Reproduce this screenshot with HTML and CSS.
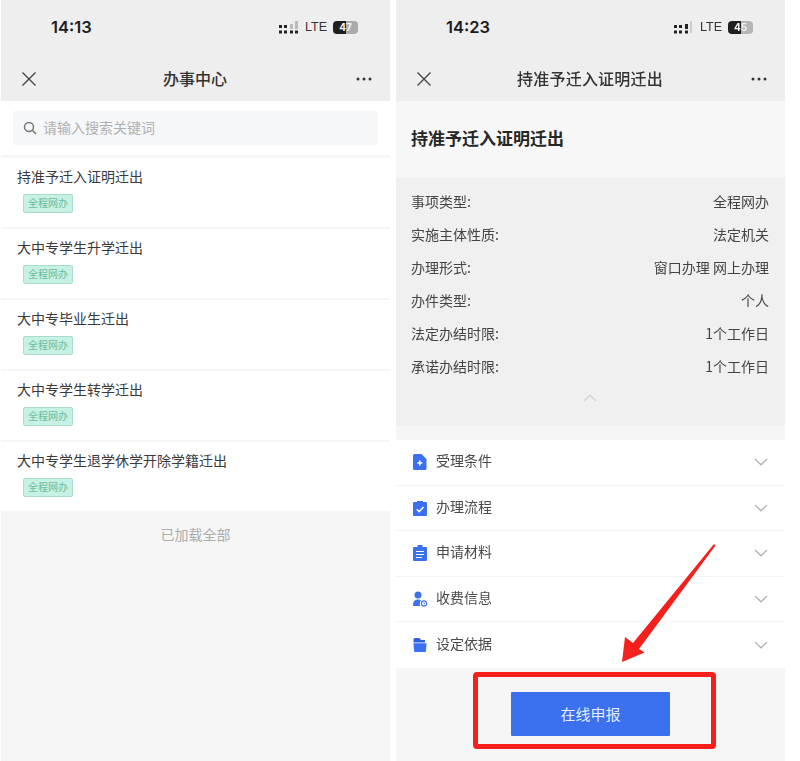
FILE: index.html
```html
<!DOCTYPE html>
<html lang="zh">
<head>
<meta charset="utf-8">
<title>办事中心</title>
<link rel="stylesheet" href="styles.css">
</head>
<body>
<svg class="defs" width="0" height="0" aria-hidden="true">
  <defs>
    <symbol id="close" viewBox="0 0 16 16"><path d="M1.5 1.5 14.5 14.5M14.5 1.5 1.5 14.5" fill="none" stroke="currentColor" stroke-width="1.4"/></symbol>
    <symbol id="more" viewBox="0 0 16 4"><circle cx="2" cy="2" r="1.5"/><circle cx="8" cy="2" r="1.5"/><circle cx="14" cy="2" r="1.5"/></symbol>
    <symbol id="down" viewBox="0 0 14 8"><path d="M1 1 7 6.8 13 1" fill="none" stroke="currentColor" stroke-width="1.2"/></symbol>
  </defs>
</svg>
<main class="screens">
  <section class="phone phone-list">
    <header class="top">
      <div class="status">
        <span class="time">14:13</span>
        <div class="status-right">
          <svg class="signal" width="20" height="13" viewBox="0 0 20 13"><g fill="#222"><rect x="0" y="4" width="3" height="3"/><rect x="5" y="4" width="3" height="3"/><rect x="0" y="9.500" width="3" height="3"/><rect x="5" y="9.500" width="3" height="3"/><rect x="11" y="9.500" width="3" height="3"/><rect x="16" y="9.500" width="3" height="3"/></g><g fill="#bbb"><rect x="11" y="3" width="3" height="5"/><rect x="16" y="0" width="3" height="8"/></g></svg>
          <span class="lte">LTE</span>
          <span class="battery b47"><span>47</span></span>
        </div>
      </div>
      <nav class="nav">
        <svg class="nav-close"><use href="#close"/></svg>
        <h1 class="nav-title">办事中心</h1>
        <svg class="nav-more"><use href="#more"/></svg>
      </nav>
    </header>
    <div class="search-wrap">
      <div class="search">
        <svg width="14" height="14" viewBox="0 0 14 14"><circle cx="6" cy="6" r="4.500" fill="none" stroke="#777" stroke-width="1.500"/><path d="M9.500 9.500 13 13" stroke="#777" stroke-width="1.600"/></svg>
        <span class="search-text">请输入搜索关键词</span>
      </div>
    </div>
    <ul class="list">
      <li class="item"><p class="item-title">持准予迁入证明迁出</p><span class="tag">全程网办</span></li>
      <li class="item"><p class="item-title">大中专学生升学迁出</p><span class="tag">全程网办</span></li>
      <li class="item"><p class="item-title">大中专毕业生迁出</p><span class="tag">全程网办</span></li>
      <li class="item"><p class="item-title">大中专学生转学迁出</p><span class="tag">全程网办</span></li>
      <li class="item"><p class="item-title">大中专学生退学休学开除学籍迁出</p><span class="tag">全程网办</span></li>
    </ul>
    <p class="loaded">已加载全部</p>
  </section>

  <section class="phone phone-detail">
    <header class="top">
      <div class="status">
        <span class="time">14:23</span>
        <div class="status-right">
          <svg class="signal" width="20" height="13" viewBox="0 0 20 13"><g fill="#222"><rect x="0" y="4" width="3" height="3"/><rect x="5" y="4" width="3" height="3"/><rect x="0" y="9.500" width="3" height="3"/><rect x="5" y="9.500" width="3" height="3"/><rect x="11" y="9.500" width="3" height="3"/><rect x="11" y="3" width="3" height="5"/></g><g fill="#ccc"><rect x="16" y="0" width="2" height="12"/></g></svg>
          <span class="lte">LTE</span>
          <span class="battery b45"><span>45</span></span>
        </div>
      </div>
      <nav class="nav">
        <svg class="nav-close"><use href="#close"/></svg>
        <h1 class="nav-title">持准予迁入证明迁出</h1>
        <svg class="nav-more"><use href="#more"/></svg>
      </nav>
    </header>
    <h2 class="detail-title">持准予迁入证明迁出</h2>
    <dl class="facts">
      <div class="fact"><dt>事项类型:</dt><dd>全程网办</dd></div>
      <div class="fact"><dt>实施主体性质:</dt><dd>法定机关</dd></div>
      <div class="fact"><dt>办理形式:</dt><dd>窗口办理 网上办理</dd></div>
      <div class="fact"><dt>办件类型:</dt><dd>个人</dd></div>
      <div class="fact"><dt>法定办结时限:</dt><dd>1个工作日</dd></div>
      <div class="fact"><dt>承诺办结时限:</dt><dd>1个工作日</dd></div>
      <svg class="collapse" width="14" height="8" viewBox="0 0 14 8"><path d="M1 7 7 1.200 13 7" fill="none" stroke="#d4d4d4" stroke-width="1.200"/></svg>
    </dl>
    <ul class="accordion">
      <li class="acc">
        <svg class="acc-icon" viewBox="0 0 14 16"><path d="M1.500 0H8.500L13.500 5V14.500A1.500 1.500 0 0 1 12 16H1.500A1.500 1.500 0 0 1 0 14.500V1.500A1.500 1.500 0 0 1 1.500 0Z" fill="#3b70ef"/><path d="M6.800 6.500V11.500M4.300 9H9.300" stroke="#fff" stroke-width="1.500"/></svg>
        <span class="acc-label">受理条件</span>
        <svg class="acc-arrow"><use href="#down"/></svg>
      </li>
      <li class="acc">
        <svg class="acc-icon" viewBox="0 0 14 16"><path d="M1 2H4V1H10V2H13A1 1 0 0 1 14 3V15A1 1 0 0 1 13 16H1A1 1 0 0 1 0 15V3A1 1 0 0 1 1 2Z" fill="#3b70ef"/><path d="M3.800 9.300 6.200 11.600 10.500 7" fill="none" stroke="#fff" stroke-width="1.500"/></svg>
        <span class="acc-label">办理流程</span>
        <svg class="acc-arrow"><use href="#down"/></svg>
      </li>
      <li class="acc">
        <svg class="acc-icon" viewBox="0 0 14 16"><path d="M1 2H4.500V0H9.500V2H13A1 1 0 0 1 14 3V15A1 1 0 0 1 13 16H1A1 1 0 0 1 0 15V3A1 1 0 0 1 1 2Z" fill="#3b70ef"/><path d="M3 6.500H11M3 9.500H11M3 12.500H9" stroke="#fff" stroke-width="1.200"/></svg>
        <span class="acc-label">申请材料</span>
        <svg class="acc-arrow"><use href="#down"/></svg>
      </li>
      <li class="acc">
        <svg class="acc-icon" viewBox="0 0 14 16"><circle cx="5" cy="4" r="3.500" fill="#3b70ef"/><path d="M0 14.500C0 10 2.500 8.500 5 8.500C6.500 8.500 7.500 9 8 9.500C6.500 11 6.500 13.500 7.500 15H1A1 1 0 0 1 0 14.500Z" fill="#3b70ef"/><circle cx="11" cy="12.500" r="2.600" fill="none" stroke="#3b70ef" stroke-width="1.100"/><path d="M11 11.300V12.800H12" fill="none" stroke="#3b70ef" stroke-width=".8"/></svg>
        <span class="acc-label">收费信息</span>
        <svg class="acc-arrow"><use href="#down"/></svg>
      </li>
      <li class="acc">
        <svg class="acc-icon" viewBox="0 0 14 16"><path d="M2 1H6.500L8 3H12V5.500H0.500V2.500A1.500 1.500 0 0 1 2 1Z" fill="#2f62da"/><path d="M0.500 6.300H13.500L13 14A1 1 0 0 1 12 15H2A1 1 0 0 1 1 14Z" fill="#3b70ef"/></svg>
        <span class="acc-label">设定依据</span>
        <svg class="acc-arrow"><use href="#down"/></svg>
      </li>
    </ul>
    <footer class="action">
      <button class="apply" type="button">在线申报</button>
    </footer>
    <div class="highlight"></div>
    <svg class="pointer" width="100" height="124" viewBox="0 0 100 124"><path d="M95 0 96.500 1.500 20 105 25.500 108.500 3 118 6 93 14 99Z" fill="#f5201c"/></svg>
  </section>
</main>
</body>
</html>
```
FILE: styles.css
```css
* { box-sizing: border-box; margin: 0; padding: 0; }
html, body { background: #fff; }
body {
  width: 800px;
  height: 761px;
  overflow: hidden;
  font-family: "Noto Sans CJK SC", "Noto Sans", sans-serif;
  color: #3a3a3a;
}
.defs { position: absolute; }
.screens { display: flex; gap: 6px; height: 761px; padding-left: 1px; filter: blur(.4px); }
.phone { position: relative; width: 389px; height: 761px; background: #f6f6f6; display: flex; flex-direction: column; }

.top { height: 101px; background: #eeeeee; flex: none; }
.status { height: 54px; display: flex; align-items: center; justify-content: space-between; padding: 0 32px 0 50px; }
.time { font-family: Inter, "Liberation Sans", sans-serif; font-size: 16.500px; font-weight: 600; color: #1c1c1c; }
.status-right { display: flex; align-items: center; gap: 6px; }
.lte { font-family: "Liberation Sans", sans-serif; font-size: 12.500px; color: #333; width: 22px; }
.battery { width: 25px; height: 13px; border-radius: 4px; font-family: Inter, "Liberation Sans", sans-serif; font-size: 10px; font-weight: 700; line-height: 13px; color: #f4f4f4; text-align: center; }
.b47 { background: linear-gradient(90deg, #1f1f1f 52%, #ababab 52%); }
.b45 { background: linear-gradient(90deg, #1f1f1f 50%, #b5b5b5 50%); }

.nav { height: 47px; padding: 3px 18px 0 20px; display: flex; align-items: center; justify-content: space-between; }
.nav-close { width: 16px; height: 16px; color: #444; flex: none; }
.nav-more { width: 16px; height: 4px; fill: #333; flex: none; }
.nav-title { font-size: 16px; font-weight: 500; color: #333; line-height: 22px; padding: 0 3px 2px 0; }
.phone-detail .nav-title { letter-spacing: .2px; }

.search-wrap { height: 54px; background: #fff; padding: 10px 12px 10px 12px; flex: none; }
.search { height: 34px; background: #f6f7f9; border-radius: 2px; display: flex; align-items: center; gap: 6px; padding-left: 10px; font-size: 14px; color: #b0b0b0; }
.search-text { padding-bottom: 3px; }
.list { list-style: none; margin-top: 3px; background: #fff; flex: none; }
.item { height: 71px; padding: 8px 16px 0; border-bottom: 2px solid #f6f6f6; }
.item-title { font-size: 14px; line-height: 20px; color: #3a3a3a; }
.tag { display: block; width: 50px; height: 19px; margin: 8px 0 0 6px; border: 1px solid #aadccd; border-radius: 2px; background: #c6f1e4; font-size: 10px; line-height: 16px; text-align: center; color: #66bda2; }
.loaded { margin-top: 11px; font-size: 14px; line-height: 20px; text-align: center; color: #acacac; }

.detail-title { height: 77px; flex: none; padding-left: 15px; font-size: 17px; line-height: 73px; font-weight: 700; color: #262626; background: #f7f7f7; }
.facts { height: 248px; flex: none; padding: 6px 16px 0 15px; background: #f0f0f0; }
.fact { height: 33px; display: flex; align-items: center; justify-content: space-between; font-size: 14px; color: #444; }
.fact dd { margin: 0; }
.collapse { display: block; margin: 12px auto 0; }
.accordion { list-style: none; flex: none; margin-top: 14px; background: #fff; }
.acc { height: 45.600px; display: flex; align-items: center; padding: 0 17px 0 17px; border-bottom: 1px solid #f4f4f4; }
.acc:last-child { border-bottom: 0; }
.acc-icon { width: 14px; height: 16px; flex: none; }
.acc-label { margin-left: 9px; font-size: 14px; color: #4a4a4a; flex: 1; padding-bottom: 4px; }
.acc-arrow { width: 14px; height: 8px; color: #b0b0b0; flex: none; }
.action { flex: 1; display: flex; justify-content: center; align-items: flex-start; padding-top: 24px; }
.highlight { position: absolute; left: 77px; top: 672px; width: 243px; height: 77px; border: 5px solid #f5201c; border-radius: 4px; }
.apply { width: 159px; height: 44px; border: 0; border-radius: 1px; background: #3b70ef; color: #e6edfd; font-family: inherit; font-size: 15px; }
.pointer { position: absolute; left: 223px; top: 544px; }
```
